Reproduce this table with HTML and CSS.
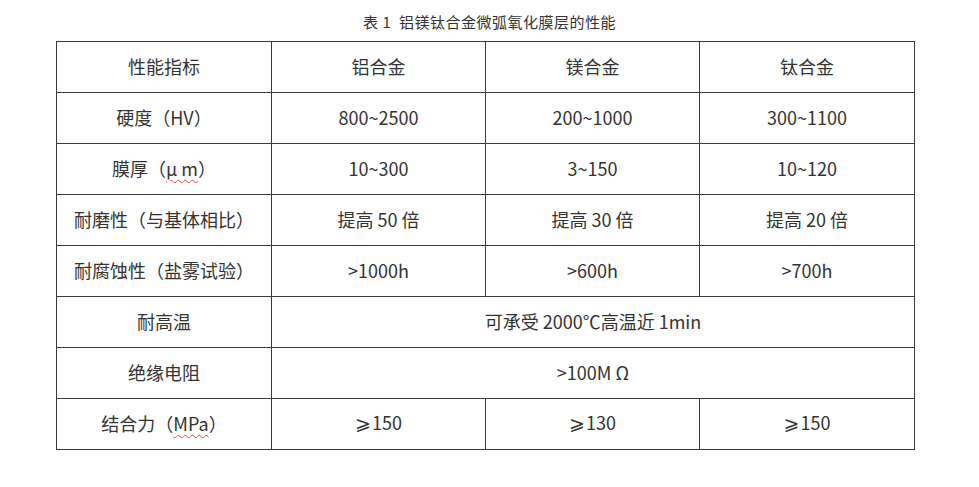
FILE: index.html
```html
<!DOCTYPE html>
<html lang="zh">
<head>
<meta charset="utf-8">
<link rel="stylesheet" href="styles.css">
</head>
<body>
<div class="page">
  <div class="title">表 1&nbsp; 铝镁钛合金微弧氧化膜层的性能</div>
  <table class="props">
    <colgroup><col class="c1"><col class="c2"><col class="c3"><col class="c4"></colgroup>
    <tr><td>性能指标</td><td>铝合金</td><td>镁合金</td><td>钛合金</td></tr>
    <tr><td>硬度（HV）</td><td>800~2500</td><td>200~1000</td><td>300~1100</td></tr>
    <tr><td>膜厚（<span class="sp">μ m</span>）</td><td>10~300</td><td>3~150</td><td>10~120</td></tr>
    <tr><td>耐磨性（与基体相比）</td><td>提高 50 倍</td><td>提高 30 倍</td><td>提高 20 倍</td></tr>
    <tr><td>耐腐蚀性（盐雾试验）</td><td>&gt;1000h</td><td>&gt;600h</td><td>&gt;700h</td></tr>
    <tr><td>耐高温</td><td colspan="3">可承受 2000℃高温近 1min</td></tr>
    <tr><td>绝缘电阻</td><td colspan="3">&gt;100M Ω</td></tr>
    <tr><td>结合力（<span class="sp">MPa</span>）</td><td><span class="ge">⩾</span>150</td><td><span class="ge">⩾</span>130</td><td><span class="ge">⩾</span>150</td></tr>
  </table>
</div>
</body>
</html>
```
FILE: styles.css
```css
html, body {
  margin: 0;
  padding: 0;
  background: #ffffff;
}
.page {
  width: 979px;
  height: 487px;
  font-family: "Noto Sans CJK SC", "Noto Sans", sans-serif;
  color: #333333;
}
.title {
  margin: 0;
  padding-top: 12px;
  height: 20px;
  line-height: 20px;
  font-size: 15px;
  letter-spacing: 0.5px;
  text-align: center;
  margin-bottom: 9px;
  color: #333;
}
.props {
  margin-left: 56px;
  border-collapse: collapse;
  table-layout: fixed;
  width: 859px;
}
.c1 { width: 215px; }
.c2 { width: 214px; }
.c3 { width: 214px; }
.c4 { width: 215px; }
.props td {
  border: 1px solid #3a3a3a;
  height: 47px;
  padding: 0 0 3px 0;
  text-align: center;
  vertical-align: middle;
  font-size: 18px;
  line-height: 24px;
  color: #333;
}
.sp {
  text-decoration: underline wavy #e04848;
  text-decoration-thickness: 1px;
  text-underline-offset: 3px;
}
.ge {
  font-family: "DejaVu Sans", sans-serif;
  font-size: 19px;
  margin-right: 1px;
}
```
